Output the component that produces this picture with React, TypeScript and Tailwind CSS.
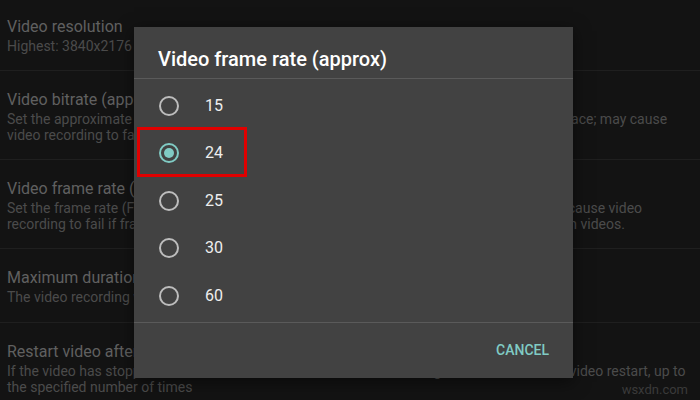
const rows = [
  { title: "Video resolution", lines: ["Highest: 3840x2176"] },
  {
    title: "Video bitrate (approx)",
    lines: [
      "Set the approximate video bitrate (higher values give better quality but use more storage space; may cause",
      "video recording to fail if bitrate is not supported)",
    ],
  },
  {
    title: "Video frame rate (approx)",
    lines: [
      "Set the frame rate (FPS) for video (note that the actual frame rate may vary by device; may cause video",
      "recording to fail if frame rate is not supported by the camera, or may result in jerky or broken videos.",
    ],
  },
  {
    title: "Maximum duration of video",
    lines: ["The video recording will stop after the specified duration"],
  },
  {
    title: "Restart video after max duration",
    lines: [
      "If the video has stopped due to the max duration or max file size being hit, allow automatic video restart, up to",
      "the specified number of times",
    ],
  },
];

const rates = ["15", "24", "25", "30", "60"];

function Radio({ checked }: { checked: boolean }) {
  return (
    <span
      className={
        "flex h-[20px] w-[20px] shrink-0 items-center justify-center rounded-full border-2 " +
        (checked ? "border-[#80cbc4]" : "border-[#bdbdbd]")
      }
    >
      {checked && <span className="h-[10px] w-[10px] rounded-full bg-[#80cbc4]" />}
    </span>
  );
}

export default function App() {
  return (
    <div className="relative h-[400px] w-[700px] overflow-hidden bg-[#131313] font-['Roboto',sans-serif]">
      <div className="flex flex-col">
        {rows.map((r, i) => (
          <div
            key={r.title}
            className={
              "flex flex-col whitespace-nowrap px-[7px] " +
              (i === 0 ? "h-[71px] pt-[16px] " : i === 3 ? "h-[74px] pt-[18px] " : "h-[89px] pt-[18px] ") +
              (i < 4 ? "border-b border-[#1f1f1f]" : "")
            }
          >
            <div className="text-[16px] leading-[22px] text-[#606060]">{r.title}</div>
            {r.lines.map((l) => (
              <div key={l} className="text-[14px] leading-[16px] text-[#4b4b4b]">
                {l}
              </div>
            ))}
          </div>
        ))}
      </div>

      <div className="absolute right-[12px] bottom-[1px] text-[13px] text-[#3a3a3a]">wsxdn.com</div>

      <div className="absolute left-[134px] top-[27px] flex h-[351px] w-[439px] flex-col bg-[#424242] shadow-[0_4px_16px_rgba(0,0,0,0.5)]">
        <div className="h-[52px] border-b border-[#5a5a5a] pl-[24px] pt-[20px] text-[20px] leading-[24px] font-medium text-white">
          Video frame rate (approx)
        </div>
        <div className="flex flex-1 flex-col pt-[3px]">
          {rates.map((r) => (
            <div key={r} className="flex h-[47.5px] items-center gap-[26px] pl-[25px]">
              <Radio checked={r === "24"} />
              <span className="text-[16px] text-[#eeeeee]">{r}</span>
            </div>
          ))}
        </div>
        <div className="flex h-[56px] items-center justify-end border-t border-[#5a5a5a] pr-[24px]">
          <span className="text-[14px] font-medium text-[#80cbc4]">CANCEL</span>
        </div>
      </div>

      <div className="absolute left-[137px] top-[127px] h-[50px] w-[110px] border-[3px] border-[#e00000]" />
    </div>
  );
}
